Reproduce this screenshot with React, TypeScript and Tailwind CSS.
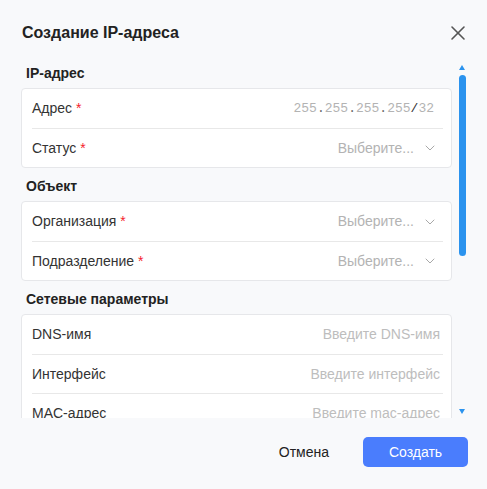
import { ChevronDown, X } from "lucide-react";

type Row = {
    label: string;
    required?: boolean;
    kind: "ip" | "select" | "input";
    placeholder?: string;
};

const sections: { title: string; rows: Row[] }[] = [
    {
        title: "IP-адрес",
        rows: [
            { label: "Адрес", required: true, kind: "ip" },
            { label: "Статус", required: true, kind: "select" },
        ],
    },
    {
        title: "Объект",
        rows: [
            { label: "Организация", required: true, kind: "select" },
            { label: "Подразделение", required: true, kind: "select" },
        ],
    },
    {
        title: "Сетевые параметры",
        rows: [
            { label: "DNS-имя", kind: "input", placeholder: "Введите DNS-имя" },
            { label: "Интерфейс", kind: "input", placeholder: "Введите интерфейс" },
            { label: "MAC-адрес", kind: "input", placeholder: "Введите mac-адрес" },
        ],
    },
];

function IpMask() {
    const dot = <span className="text-[#6b6b6b]">.</span>;
    return (
        <span className="font-['Liberation_Mono',monospace] text-[13px] text-[#b3b3b3] pr-[9px]">
            255{dot}255{dot}255{dot}255<span className="text-[#333]">/</span>32
        </span>
    );
}

function FieldRow({ row, first }: { row: Row; first: boolean }) {
    return (
        <div className={`ml-[10px] mr-[8px] h-[39px] flex items-center justify-between ${first ? "" : "border-t border-[#e8e8e8]"}`}>
            <span className="text-[14px] text-[#333]">
                {row.label}
                {row.required && <span className="text-[#f5222d]"> *</span>}
            </span>
            {row.kind === "ip" && <IpMask />}
            {row.kind === "select" && (
                <span className="flex items-center gap-[8px] pr-[5px] text-[14px] text-[#b3b3b3]">
                    Выберите...
                    <ChevronDown size={16} strokeWidth={1.5} className="text-[#a8a8a8]" />
                </span>
            )}
            {row.kind === "input" && (
                <span className="pr-[3px] text-[14px] text-[#bdbdbd]">{row.placeholder}</span>
            )}
        </div>
    );
}

export default function App() {
    return (
        <div className="w-[487px] h-[489px] bg-[#f8f9fb] font-['Liberation_Sans',Arial,sans-serif] text-[#222]">
            <div className="pl-[22px] pr-[17px] pt-[21px] pb-[10px] flex items-center justify-between">
                <h1 className="text-[16px] leading-[24px] font-bold text-[#222]">Создание IP-адреса</h1>
                <X size={24} strokeWidth={1.6} className="text-[#555]" />
            </div>

            <div className="relative h-[363px] overflow-hidden">
                <div className="pl-[21px] pr-[35px]">
                    {sections.map((s) => (
                        <div key={s.title}>
                            <div className="pl-[5px] pt-[9px] pb-[6px] text-[14px] leading-[18px] font-bold text-[#222]">{s.title}</div>
                            <div className="bg-white border border-[#e6e7ea] rounded-[4px]">
                                {s.rows.map((r, i) => (
                                    <FieldRow key={r.label} row={r} first={i === 0} />
                                ))}
                            </div>
                        </div>
                    ))}
                </div>

                <div className="absolute left-[459px] top-[10px] w-0 h-0 border-l-[3.5px] border-r-[3.5px] border-b-[5px] border-l-transparent border-r-transparent border-b-[#2b93ee]" />
                <div className="absolute left-[459px] top-[20px] w-[7px] h-[181px] rounded-full bg-[#2b93ee]" />
                <div className="absolute left-[459px] top-[354px] w-0 h-0 border-l-[3.5px] border-r-[3.5px] border-t-[5px] border-l-transparent border-r-transparent border-t-[#2b93ee]" />
            </div>

            <div className="pt-[19px] pr-[19px] flex items-center justify-end">
                <button className="mr-[34px] text-[14px] text-[#222]">Отмена</button>
                <button className="w-[105px] h-[30px] rounded-[5px] bg-[#4a7dfd] text-white text-[14px]">Создать</button>
            </div>
        </div>
    );
}
